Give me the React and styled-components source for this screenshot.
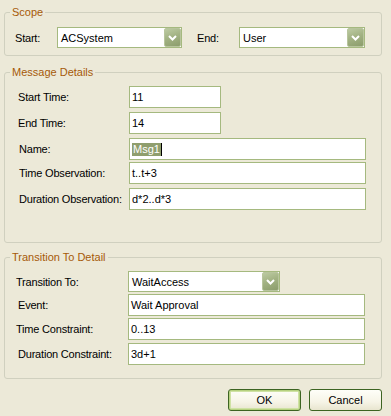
import React from "react";
import styled, { createGlobalStyle } from "styled-components";

const GlobalStyle = createGlobalStyle`
  body {
    margin: 0;
    background: #ece9d8;
    font-family: "Liberation Sans", Arial, sans-serif;
    font-size: 11px;
    color: #000000;
  }
`;

const Dialog = styled.div`
  width: 391px;
  height: 416px;
  box-sizing: border-box;
  padding: 5px 9px 0 4px;
  display: flex;
  flex-direction: column;
  background: #ece9d8;
`;

const Group = styled.fieldset`
  margin: ${(p) => p.$mt || 0}px 0 0 0;
  padding: 0;
  min-width: 0;
  border: 1px solid #d0d0bf;
  border-radius: 3px;
`;

const Legend = styled.legend`
  margin-left: 5px;
  padding: 0 2px;
  line-height: 14px;
  color: #a65a08;
`;

const Body = styled.div`
  padding: ${(p) => p.$pt}px 0 ${(p) => p.$pb}px ${(p) => p.$pl}px;
`;

const Row = styled.div`
  display: flex;
  align-items: center;
  margin-top: ${(p) => p.$mt || 0}px;
`;

const Label = styled.div`
  width: ${(p) => p.$w}px;
  margin-left: ${(p) => p.$ml || 0}px;
  padding-left: ${(p) => p.$indent || 0}px;
  box-sizing: border-box;
  white-space: nowrap;
  letter-spacing: -0.2px;
`;

const Field = styled.div`
  width: ${(p) => p.$w}px;
  height: ${(p) => p.$h || 22}px;
  box-sizing: border-box;
  border: 1px solid #a5b97f;
  background: #ffffff;
  padding-left: 2px;
  display: flex;
  align-items: center;
  white-space: nowrap;
`;

const Selected = styled.span`
  background: #8f9e6e;
  color: #ffffff;
  padding: 0 1px;
  line-height: 13px;
`;

const Caret = styled.span`
  display: inline-block;
  width: 1px;
  height: 13px;
  background: #000000;
`;

const ComboBox = styled.div`
  position: relative;
  width: ${(p) => p.$w}px;
  height: 21px;
  box-sizing: border-box;
  border: 1px solid #a5b97f;
  background: #ffffff;
  padding-left: 3px;
  display: flex;
  align-items: center;
  white-space: nowrap;
`;

const DropButton = styled.div`
  position: absolute;
  right: 0;
  top: 0;
  width: 17px;
  height: 19px;
  box-sizing: border-box;
  border: 1px solid #b8c59d;
  border-radius: 2px;
  background: linear-gradient(160deg, #bccaa2 0%, #a3b384 45%, #8c9d6c 100%);
  display: flex;
  align-items: center;
  justify-content: center;
`;

const ButtonRow = styled.div`
  display: flex;
  justify-content: flex-end;
  gap: 8px;
  margin-top: 10px;
`;

const Button = styled.div`
  width: 73px;
  height: 22px;
  box-sizing: border-box;
  border: 1px solid #3d6422;
  border-radius: 3px;
  background: linear-gradient(180deg, #fefef8 0%, #f6f4e6 60%, #e8e5cf 100%);
  box-shadow: ${(p) =>
    p.$default ? "inset 0 0 0 1px #b6d17f, inset 0 0 0 2px #cfe2a4" : "none"};
  display: flex;
  align-items: center;
  justify-content: center;
`;

const Combo = ({ w, children }) => (
  <ComboBox $w={w}>
    {children}
    <DropButton>
      <svg width="9" height="6" viewBox="0 0 9 6">
        <path d="M1 1 L4.5 4.5 L8 1" fill="none" stroke="#ffffff" strokeWidth="2" />
      </svg>
    </DropButton>
  </ComboBox>
);

const App = () => {
  return (
    <>
      <GlobalStyle />
      <Dialog>
        <Group>
          <Legend>Scope</Legend>
          <Body $pt={8} $pl={10} $pb={7}>
            <Row>
              <Label $w={42}>Start:</Label>
              <Combo w={125}>ACSystem</Combo>
              <Label $w={42} $ml={15}>End:</Label>
              <Combo w={126}>User</Combo>
            </Row>
          </Body>
        </Group>

        <Group $mt={9}>
          <Legend>Message Details</Legend>
          <Body $pt={7} $pl={13} $pb={32}>
            <Row>
              <Label $w={111}>Start Time:</Label>
              <Field $w={92}>11</Field>
            </Row>
            <Row $mt={4}>
              <Label $w={111}>End Time:</Label>
              <Field $w={92}>14</Field>
            </Row>
            <Row $mt={4}>
              <Label $w={111} $indent={1}>Name:</Label>
              <Field $w={237}>
                <Selected>Msg1</Selected>
                <Caret />
              </Field>
            </Row>
            <Row $mt={2}>
              <Label $w={111} $indent={1}>Time Observation:</Label>
              <Field $w={237}>t..t+3</Field>
            </Row>
            <Row $mt={4}>
              <Label $w={111} $indent={1}>Duration Observation:</Label>
              <Field $w={237}>d*2..d*3</Field>
            </Row>
          </Body>
        </Group>

        <Group $mt={7}>
          <Legend>Transition To Detail</Legend>
          <Body $pt={7} $pl={11} $pb={13}>
            <Row>
              <Label $w={112}>Transition To:</Label>
              <Combo w={152}>WaitAccess</Combo>
            </Row>
            <Row $mt={2}>
              <Label $w={112} $indent={2}>Event:</Label>
              <Field $w={237}>Wait Approval</Field>
            </Row>
            <Row $mt={2}>
              <Label $w={112}>Time Constraint:</Label>
              <Field $w={237}>0..13</Field>
            </Row>
            <Row $mt={3}>
              <Label $w={112} $indent={2}>Duration Constraint:</Label>
              <Field $w={237}>3d+1</Field>
            </Row>
          </Body>
        </Group>

        <ButtonRow>
          <Button $default>OK</Button>
          <Button>Cancel</Button>
        </ButtonRow>
      </Dialog>
    </>
  );
};

export default App;
